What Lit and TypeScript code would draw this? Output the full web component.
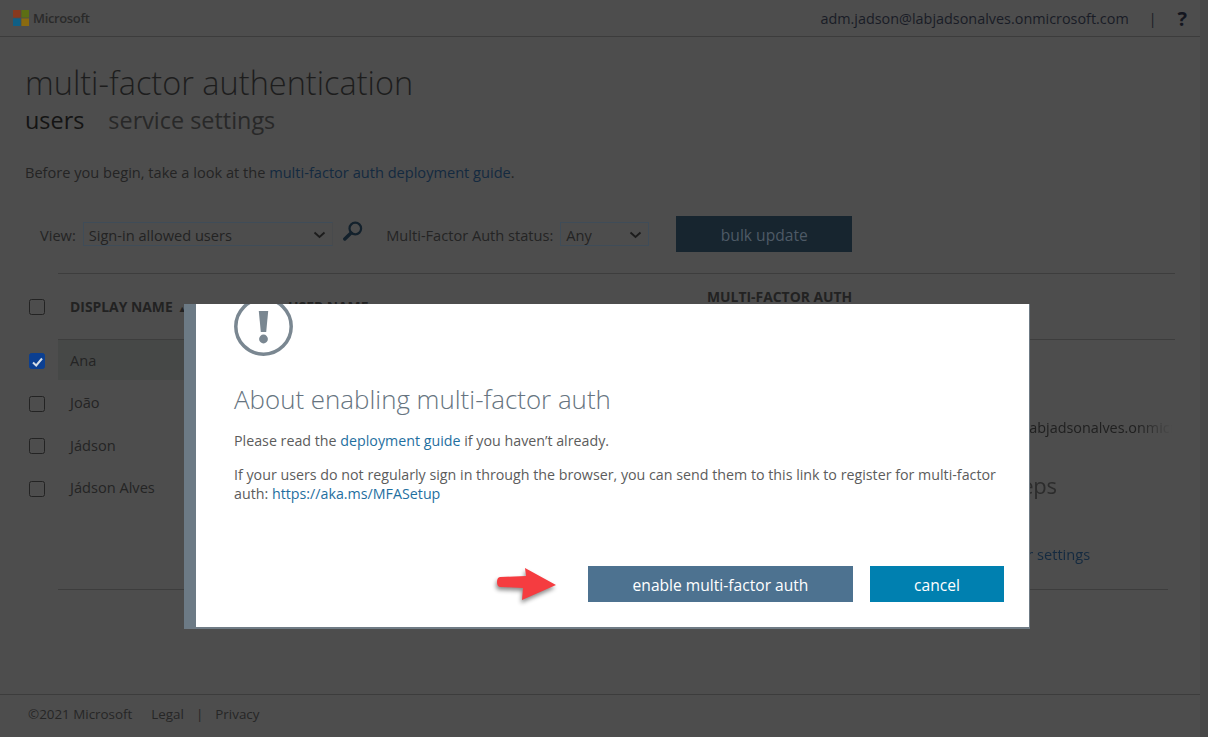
import { LitElement, html, css, svg } from "lit";
import { customElement } from "lit/decorators.js";

const chevron = html`<svg class="chev" width="13" height="8" viewBox="0 0 13 8"><path d="M1.5 1.5 6.5 6 11.5 1.5" fill="none" stroke="#1c1c1c" stroke-width="1.8"/></svg>`;
const logo = svg`<svg class="logo" width="16" height="16" viewBox="0 0 16 16"><rect width="7.6" height="7.6" fill="#87391f"/><rect x="8.4" width="7.6" height="7.6" fill="#5d6f14"/><rect y="8.4" width="7.6" height="7.6" fill="#0f5f85"/><rect x="8.4" y="8.4" width="7.6" height="7.6" fill="#8a6a10"/></svg>`;
const tick = html`<svg width="16" height="16" viewBox="0 0 16 16"><path d="M3 8.5 6.2 11.5 12 4.5" fill="none" stroke="#d5dde6" stroke-width="2"/></svg>`;

@customElement("app-root")
export class AppRoot extends LitElement {
  static styles = css`
    :host { display: block; position: relative; width: 1208px; height: 737px; overflow: hidden; background: #474747; font-family: "Open Sans", "Liberation Sans", sans-serif; }
    * { box-sizing: border-box; }
    .page { width: 1200px; height: 737px; background: #4d4d4d; color: #242424; display: flex; flex-direction: column; font-size: 14.6px; }
    a { color: #142a40; text-decoration: none; }
    .top { height: 37px; flex: none; border-bottom: 1px solid #3c3c3c; display: flex; align-items: center; padding: 0 13px; }
    .logo { margin-right: 4px; }
    .brand { font-weight: 600; font-size: 13px; color: #2a2a2a; letter-spacing: -0.35px; }
    .email { margin-left: auto; color: #191c26; font-size: 14.4px; }
    .sep { margin-left: 20px; color: #191c26; font-size: 14px; }
    .help { margin-left: 21px; font-size: 20px; font-weight: 700; color: #14161f; }
    .main { flex: 1; display: flex; flex-direction: column; padding-top: 23px; }
    h1 { margin: 0 0 0 25px; font-weight: 300; font-size: 32.5px; line-height: 45px; color: #1d1d1d; }
    .tabs { margin-left: 25px; display: flex; gap: 24px; font-size: 23.4px; line-height: 30px; color: #282828; height: 31px; }
    .tabs .on { color: #141414; }
    .intro { margin: 26px 0 0 25px; line-height: 20px; }
    .tools { margin: 34px 0 0 40px; display: flex; align-items: flex-start; height: 36px; }
    .lbl { margin-top: 9px; line-height: 20px; }
    .sel { margin-top: 6px; height: 24px; border: 1px solid #3f4c58; border-right-color: #484a4c; display: flex; align-items: center; padding: 1px 5px 0; justify-content: space-between; color: #232323; }
    .s1 { width: 250px; margin-left: 7px; }
    .s2 { width: 89px; margin-left: 7px; border-right-color: #3f4c58; }
    .chev { margin-right: 1px; }
    .find { margin: 5px 0 0 10px; flex: none; }
    .s2lbl { margin-left: 23.5px; }
    .bulk { margin-left: 27px; width: 176px; height: 36px; border: 0; background: #17252f; color: #4e5a66; font: inherit; font-size: 15.6px; padding: 1px 0 0; }
    .tbl { margin-top: 21px; display: flex; flex: 1; }
    .checks { width: 58px; flex: none; padding-left: 29px; display: flex; flex-direction: column; }
    .cell { display: flex; align-items: center; height: 42.5px; }
    .cell.h { height: 67px; }
    .cb { width: 16px; height: 16px; border: 1.4px solid #232323; border-radius: 2.5px; display: block; }
    .cb.on { background: #0b3f91; border-color: #0b3f91; }
    .data { flex: 1; min-width: 0; margin-right: 25px; }
    .head { height: 67px; border-top: 1px solid #3d3d3d; border-bottom: 1px solid #3d3d3d; display: grid; grid-template-columns: 218px 419px 1fr; font-weight: 700; font-size: 13.9px; color: #222; }
    .head span { padding-left: 12px; padding-top: 23px; line-height: 20px; }
    .head span.mfa { padding-top: 13px; padding-left: 12px; }
    .head i { font-style: normal; font-size: 9px; font-weight: 400; margin-left: 5px; }
    .body { display: flex; height: 249px; }
    .list { width: 887px; flex: none; }
    .row { height: 42.4px; padding-left: 12px; display: flex; align-items: center; }
    .row.sel-row { height: 40px; margin-bottom: 1px; background: #464847; }
    .side { width: 227px; flex: none; padding-top: 78px; overflow: hidden; white-space: nowrap; -webkit-mask-image: linear-gradient(to right, #000 85%, transparent 100%); mask-image: linear-gradient(to right, #000 85%, transparent 100%); }
    .side .m { line-height: 20px; color: #202020; font-size: 14.4px; margin-left: -11px; }
    .side h2 { margin: 31px 0 0; font-size: 22px; letter-spacing: -0.3px; line-height: 32px; font-weight: 400; color: #2c2c2c; }
    .side .l { margin-top: 43px; display: block; line-height: 20px; }
    .rule { height: 1px; background: #3d3d3d; margin-right: 7px; }
    .foot { height: 43px; flex: none; border-top: 1px solid #3c3c3c; padding: 9px 0 0 28px; display: flex; line-height: 20px; font-size: 13.4px; color: #262626; }
    .foot .legal { margin-left: 19px; }
    .foot .bar { margin: 0 12px; }
    .dlg { position: absolute; left: 184px; top: 304px; width: 846px; height: 325px; background: #fff; border-left: 12px solid #6c7a85; border-right: 1px solid #6f7b85; border-bottom: 2px solid #6f7b85; overflow: hidden; display: flex; flex-direction: column; padding: 0 25px 0 38px; color: #5c5c5c; font-size: 14.25px; }
    .warn { margin-top: -7px; display: block; flex: none; }
    .dlg h3 { margin: 24px 0 0; font-size: 25.9px; line-height: 38px; font-weight: 300; color: #667480; }
    .dlg p { margin: 0; line-height: 19px; }
    .p1 { margin-top: 13px !important; }
    .p2 { margin-top: 15px !important; }
    .dlg a { color: #1f6f9f; }
    .acts { margin-top: auto; margin-bottom: 25px; display: flex; align-items: center; justify-content: flex-end; }
    .arrow { margin-right: 31px; overflow: visible; filter: drop-shadow(-1px 3px 2px rgba(0,0,0,.45)); }
    .btn { height: 36px; border: 0; color: #fff; font: inherit; font-size: 15.6px; padding: 1px 0 0; }
    .go { width: 265px; background: #4d7290; }
    .no { width: 134px; margin-left: 17px; background: #0080b0; }
  `;

  render() {
    const rows = ["Ana", "João", "Jádson", "Jádson Alves"];
    return html`
      <div class="page">
        <header class="top">
          ${logo}<span class="brand">Microsoft</span>
          <span class="email">adm.jadson@labjadsonalves.onmicrosoft.com</span>
          <span class="sep">|</span><span class="help">?</span>
        </header>
        <main class="main">
          <h1>multi-factor authentication</h1>
          <nav class="tabs"><span class="on">users</span><span>service settings</span></nav>
          <div class="intro">Before you begin, take a look at the <a>multi-factor auth deployment guide</a>.</div>
          <div class="tools">
            <span class="lbl">View:</span>
            <div class="sel s1"><span>Sign-in allowed users</span>${chevron}</div>
            <svg class="find" width="20" height="20" viewBox="0 0 20 20"><circle cx="12.3" cy="7.5" r="5.8" fill="none" stroke="#13212c" stroke-width="2.2"/><path d="M8 12 1.8 18" stroke="#13212c" stroke-width="3.4" stroke-linecap="round"/></svg>
            <span class="lbl s2lbl">Multi-Factor Auth status:</span>
            <div class="sel s2"><span>Any</span>${chevron}</div>
            <button class="bulk">bulk update</button>
          </div>
          <div class="tbl">
            <div class="checks">
              <div class="cell h"><span class="cb"></span></div>
              ${rows.map((_, i) => html`<div class="cell"><span class="cb ${i === 0 ? "on" : ""}">${i === 0 ? tick : ""}</span></div>`)}
            </div>
            <div class="data">
              <div class="head">
                <span>DISPLAY NAME<i>▲</i></span>
                <span>USER NAME</span>
                <span class="mfa">MULTI-FACTOR AUTH</span>
              </div>
              <div class="body">
                <div class="list">
                  ${rows.map((r, i) => html`<div class="row ${i === 0 ? "sel-row" : ""}">${r}</div>`)}
                </div>
                <aside class="side">
                  <div class="m">adm.jadson@labjadsonalves.onmicrosoft.com</div>
                  <h2>quick steps</h2>
                  <a class="l">Manage user settings</a>
                </aside>
              </div>
              <div class="rule"></div>
            </div>
          </div>
        </main>
        <footer class="foot"><span>©2021 Microsoft</span><span class="legal">Legal</span><span class="bar">|</span><span>Privacy</span></footer>
      </div>
      <section class="dlg">
        <svg class="warn" width="59" height="59" viewBox="0 0 59 59">
          <circle cx="29.5" cy="29.5" r="27.7" fill="none" stroke="#7a8791" stroke-width="3.5"/>
          <path d="M24.8 14H34.2L32.2 35H26.8Z" fill="#7a8791"/>
          <circle cx="29.5" cy="42" r="4.4" fill="#7a8791"/>
        </svg>
        <h3>About enabling multi-factor auth</h3>
        <p class="p1">Please read the <a>deployment guide</a> if you haven’t already.</p>
        <p class="p2">If your users do not regularly sign in through the browser, you can send them to this link to register for multi-factor auth: <a>https://aka.ms/MFASetup</a></p>
        <div class="acts">
          <svg class="arrow" width="60" height="32" viewBox="0 0 60 32">
            <path d="M3 9 29 8 28 0 59 17 25 32 26 20 3 19Q0 18.500 0 14 0 9.500 3 9Z" fill="#f53c40"/>
          </svg>
          <button class="btn go">enable multi-factor auth</button>
          <button class="btn no">cancel</button>
        </div>
      </section>
    `;
  }
}
